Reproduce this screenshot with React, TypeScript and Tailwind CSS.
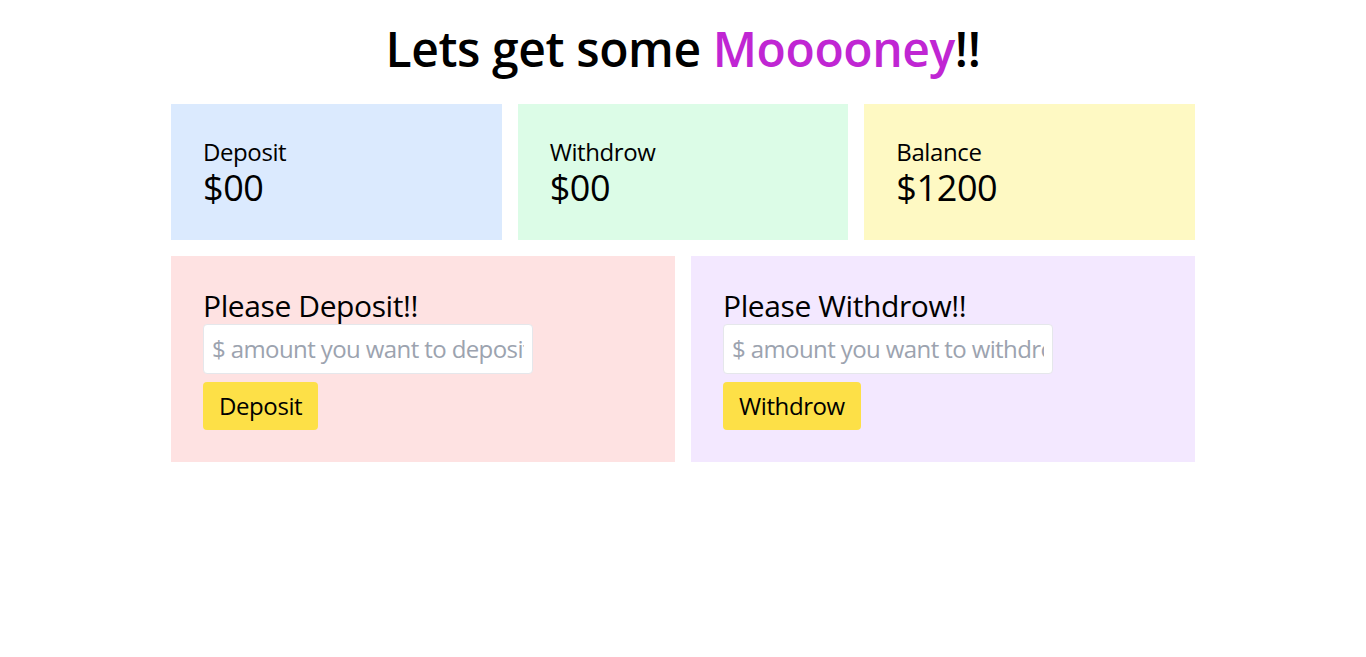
import * as React from "react";

const StatCard: React.FC<{ label: string; amount: string; bg: string }> = ({
  label,
  amount,
  bg,
}) => {
  return (
    <div className={`${bg} p-8`}>
      <p className="text-2xl leading-8">{label}</p>
      <p className="text-4xl leading-10">{amount}</p>
    </div>
  );
};

const App: React.FC = () => {
  const [deposit, setDeposit] = React.useState(0);
  const [withdrow, setWithdrow] = React.useState(0);
  const [balance, setBalance] = React.useState(1200);
  const [depositInput, setDepositInput] = React.useState("");
  const [withdrowInput, setWithdrowInput] = React.useState("");

  const handleDeposit = () => {
    const amount = parseFloat(depositInput);
    if (!amount) return;
    setDeposit(deposit + amount);
    setBalance(balance + amount);
    setDepositInput("");
  };

  const handleWithdrow = () => {
    const amount = parseFloat(withdrowInput);
    if (!amount) return;
    setWithdrow(withdrow + amount);
    setBalance(balance - amount);
    setWithdrowInput("");
  };

  return (
    <div
      className="min-h-screen bg-white tracking-[-0.025em] text-black"
      style={{ fontFamily: '"Segoe UI", "Open Sans", "Noto Sans", sans-serif' }}
    >
      <h1 className="pt-[25px] pb-[31px] text-center text-5xl leading-[48px] font-semibold">
        Lets get some <span className="text-[#c026d3]">Mooooney</span>!!
      </h1>
      <div className="mx-auto max-w-[1024px]">
        <div className="grid grid-cols-3 gap-4">
          <StatCard label="Deposit" amount={`$${deposit || "00"}`} bg="bg-[#dbeafe]" />
          <StatCard label="Withdrow" amount={`$${withdrow || "00"}`} bg="bg-[#dcfce7]" />
          <StatCard label="Balance" amount={`$${balance}`} bg="bg-[#fef9c3]" />
        </div>
        <div className="mt-4 grid grid-cols-2 gap-4">
          <div className="bg-[#fee2e2] p-8">
            <h4 className="text-3xl leading-9">Please Deposit!!</h4>
            <input
              className="block w-[330px] rounded border border-gray-200 bg-white p-2 text-2xl leading-8 tracking-[-0.025em] outline-none placeholder:text-[#9ca3af]"
              placeholder="$ amount you want to deposit"
              value={depositInput}
              onChange={(e) => setDepositInput(e.target.value)}
            />
            <button
              className="mt-2 rounded bg-[#fde047] px-4 py-2 text-2xl leading-8"
              onClick={handleDeposit}
            >
              Deposit
            </button>
          </div>
          <div className="bg-[#f3e8ff] p-8">
            <h4 className="text-3xl leading-9">Please Withdrow!!</h4>
            <input
              className="block w-[330px] rounded border border-gray-200 bg-white p-2 text-2xl leading-8 tracking-[-0.025em] outline-none placeholder:text-[#9ca3af]"
              placeholder="$ amount you want to withdrow"
              value={withdrowInput}
              onChange={(e) => setWithdrowInput(e.target.value)}
            />
            <button
              className="mt-2 rounded bg-[#fde047] px-4 py-2 text-2xl leading-8"
              onClick={handleWithdrow}
            >
              Withdrow
            </button>
          </div>
        </div>
      </div>
    </div>
  );
};

export default App;
